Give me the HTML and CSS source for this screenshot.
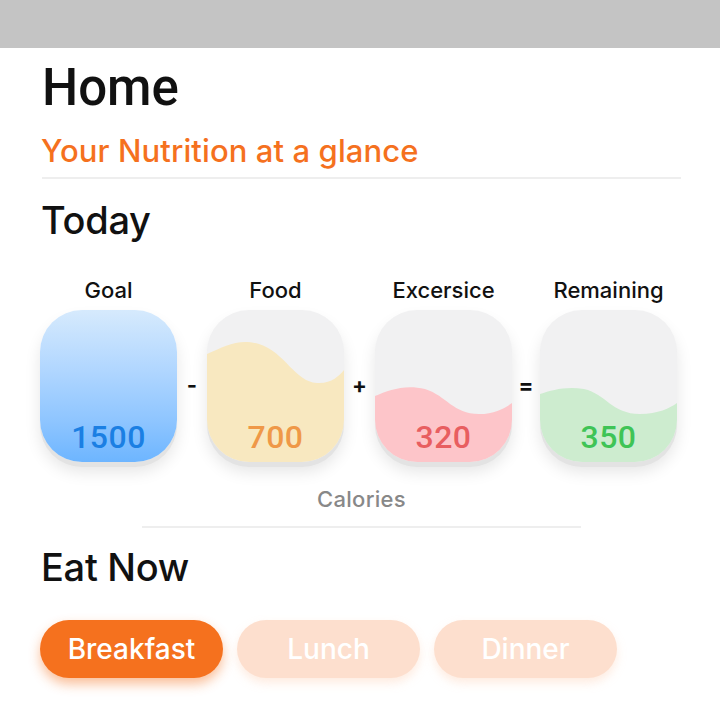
FILE: index.html
```html
<!DOCTYPE html>
<html>
<head>
<meta charset="utf-8">
<link rel="stylesheet" href="styles.css">
</head>
<body>
<div class="topbar"></div>
<main class="page">
  <h1 class="title">Home</h1>
  <p class="subtitle">Your Nutrition at a glance</p>
  <hr class="rule">
  <h2 class="section">Today</h2>
  <div class="calc">
    <div class="label">Goal</div>
    <div></div>
    <div class="label">Food</div>
    <div></div>
    <div class="label">Excersice</div>
    <div></div>
    <div class="label">Remaining</div>

    <div class="card goal"><span class="num">1500</span></div>
    <div class="op">-</div>
    <div class="card food">
      <svg class="wave" viewBox="0 0 137 152" preserveAspectRatio="none"><path d="M0 44 C 18 36, 32 28, 52 34 C 78 42, 88 72, 110 73 C 124 74, 132 66, 137 60 L137 152 L0 152 Z"/></svg>
      <span class="num">700</span>
    </div>
    <div class="op">+</div>
    <div class="card exercise">
      <svg class="wave" viewBox="0 0 137 152" preserveAspectRatio="none"><path d="M0 86 C 14 80, 30 74, 50 79 C 72 86, 78 104, 104 104 C 120 104, 130 98, 137 93 L137 152 L0 152 Z"/></svg>
      <span class="num">320</span>
    </div>
    <div class="op">=</div>
    <div class="card remain">
      <svg class="wave" viewBox="0 0 137 152" preserveAspectRatio="none"><path d="M0 84 C 12 80, 26 76, 44 79 C 66 84, 72 104, 100 104 C 118 104, 130 98, 137 93 L137 152 L0 152 Z"/></svg>
      <span class="num">350</span>
    </div>
  </div>
  <p class="unit">Calories</p>
  <hr class="rule short">
  <h2 class="section eat">Eat Now</h2>
  <div class="meals">
    <button class="meal active">Breakfast</button>
    <button class="meal">Lunch</button>
    <button class="meal">Dinner</button>
  </div>
</main>
</body>
</html>
```

FILE: styles.css
```css
* { box-sizing: border-box; }
html, body { margin: 0; padding: 0; background: #fff; }
body { font-family: "Inter", "Noto Sans", sans-serif; color: #111; width: 720px; height: 707px; overflow: hidden; }
.topbar { height: 48px; background: #c4c4c4; }
.page { padding: 0 39px 0 42px; }
.title { font-family: "Roboto", "Liberation Sans", Arial, sans-serif; font-weight: 500; font-size: 51px; line-height: 1; margin: 14px 0 0 0; color: #111; letter-spacing: 0; }
.subtitle { color: #f5711e; font-size: 31px; font-weight: 500; margin: 22px 0 0 -1px; line-height: 1; letter-spacing: 0.1px; }
.rule { border: 0; border-top: 2px solid #eeeeee; margin: 11px 0 0 0; }
.section { font-size: 38px; font-weight: 500; margin: 22px 0 0 -1px; line-height: 1; letter-spacing: -0.3px; }
.calc { display: grid; grid-template-columns: 137px 30px 137px 31px 137px 28px 137px; margin: 39px 0 0 -2px; row-gap: 8px; }
.label { text-align: center; font-size: 22px; font-weight: 500; line-height: 24px; color: #111; letter-spacing: 0; }
.card { position: relative; height: 152px; border-radius: 42px; background: #f1f1f2; overflow: hidden; display: flex; align-items: flex-end; justify-content: center; padding-bottom: 8px; box-shadow: 0 5px 0 #e3e3e3, 0 10px 16px rgba(0,0,0,0.10); }
.wave { position: absolute; left: 0; top: 0; width: 100%; height: 100%; }
.num { position: relative; font-family: "Roboto", "Liberation Sans", Arial, sans-serif; font-weight: 500; font-size: 32px; line-height: 34px; letter-spacing: 0.5px; }
.goal { background: linear-gradient(#d6eafd 0%, #b0d6ff 40%, #8cc4ff 75%, #6db5ff 100%); }
.goal .num { color: #1b7fe3; }
.food path { fill: #f8e8c0; }
.food .num { color: #ef9848; }
.exercise path { fill: #fdc5c9; }
.exercise .num { color: #e85e60; }
.remain path { fill: #cdeccf; }
.remain .num { color: #3fc456; }
.op { display: flex; align-items: center; justify-content: center; font-size: 22px; font-weight: 700; padding-bottom: 2px; }
.unit { text-align: center; color: #888; font-size: 22px; font-weight: 500; margin: 25px 0 0 0; line-height: 24px; letter-spacing: 0.3px; }
.rule.short { margin: 15px 100px 0 100px; }
.section.eat { margin-top: 20px; }
.meals { display: flex; gap: 14px; margin: 34px 0 0 -2px; }
.meal { width: 183px; height: 58px; border: 0; border-radius: 29px; font-family: "Inter", sans-serif; font-weight: 500; font-size: 28px; letter-spacing: 0; color: #fff; background: #fddfce; box-shadow: 0 5px 10px rgba(251,200,170,0.35); padding: 0; }
.meal.active { background: #f5711e; box-shadow: 0 6px 12px rgba(245,113,30,0.45); }
```
